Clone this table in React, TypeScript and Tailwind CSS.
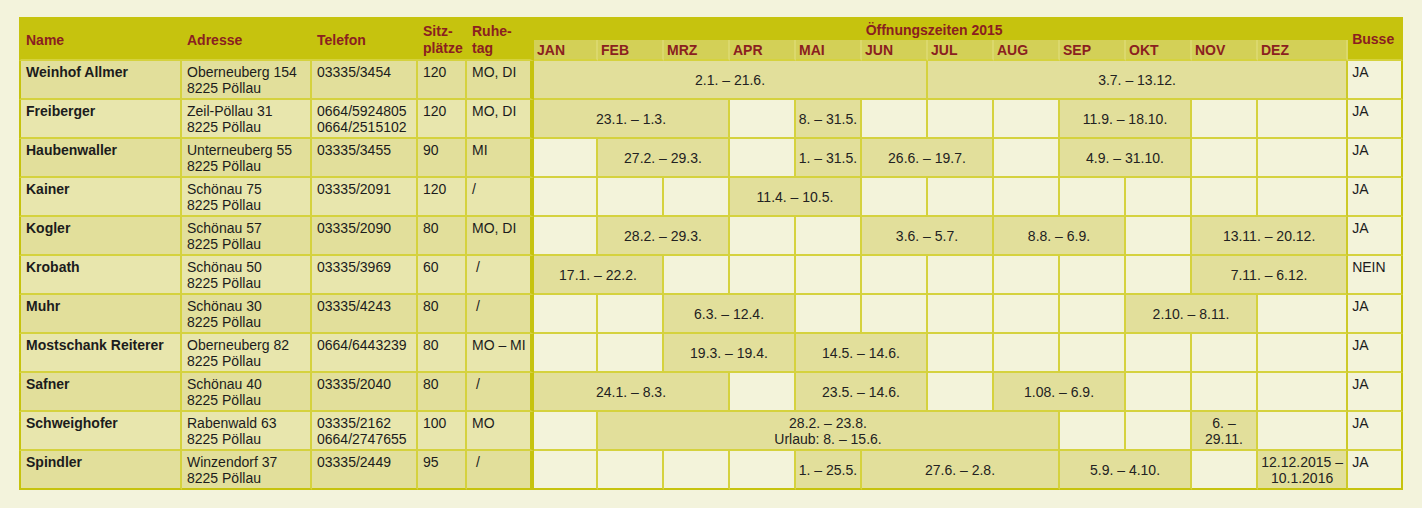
import React from 'react';

type Cell = [number, ...string[]];

type Row = {
    name: string;
    adr: string[];
    tel: string[];
    sitz: string;
    ruhe: string;
    months: Cell[];
    bus: string;
};

const MONTHS = ['JAN', 'FEB', 'MRZ', 'APR', 'MAI', 'JUN', 'JUL', 'AUG', 'SEP', 'OKT', 'NOV', 'DEZ'];

const ort = '8225 Pöllau';

const rows: Row[] = [
    { name: 'Weinhof Allmer', adr: ['Oberneuberg 154', ort], tel: ['03335/3454'], sitz: '120', ruhe: 'MO, DI', months: [[6, '2.1. – 21.6.'], [6, '3.7. – 13.12.']], bus: 'JA' },
    { name: 'Freiberger', adr: ['Zeil-Pöllau 31', ort], tel: ['0664/5924805', '0664/2515102'], sitz: '120', ruhe: 'MO, DI', months: [[3, '23.1. – 1.3.'], [1], [1, '8. – 31.5.'], [1], [1], [1], [2, '11.9. – 18.10.'], [1], [1]], bus: 'JA' },
    { name: 'Haubenwaller', adr: ['Unterneuberg 55', ort], tel: ['03335/3455'], sitz: '90', ruhe: 'MI', months: [[1], [2, '27.2. – 29.3.'], [1], [1, '1. – 31.5.'], [2, '26.6. – 19.7.'], [1], [2, '4.9. – 31.10.'], [1], [1]], bus: 'JA' },
    { name: 'Kainer', adr: ['Schönau 75', ort], tel: ['03335/2091'], sitz: '120', ruhe: '/', months: [[1], [1], [1], [2, '11.4. – 10.5.'], [1], [1], [1], [1], [1], [1], [1]], bus: 'JA' },
    { name: 'Kogler', adr: ['Schönau 57', ort], tel: ['03335/2090'], sitz: '80', ruhe: 'MO, DI', months: [[1], [2, '28.2. – 29.3.'], [1], [1], [2, '3.6. – 5.7.'], [2, '8.8. – 6.9.'], [1], [2, '13.11. – 20.12.']], bus: 'JA' },
    { name: 'Krobath', adr: ['Schönau 50', ort], tel: ['03335/3969'], sitz: '60', ruhe: '\u00a0/', months: [[2, '17.1. – 22.2.'], [1], [1], [1], [1], [1], [1], [1], [1], [2, '7.11. – 6.12.']], bus: 'NEIN' },
    { name: 'Muhr', adr: ['Schönau 30', ort], tel: ['03335/4243'], sitz: '80', ruhe: '\u00a0/', months: [[1], [1], [2, '6.3. – 12.4.'], [1], [1], [1], [1], [1], [2, '2.10. – 8.11.'], [1]], bus: 'JA' },
    { name: 'Mostschank Reiterer', adr: ['Oberneuberg 82', ort], tel: ['0664/6443239'], sitz: '80', ruhe: 'MO – MI', months: [[1], [1], [2, '19.3. – 19.4.'], [2, '14.5. – 14.6.'], [1], [1], [1], [1], [1], [1]], bus: 'JA' },
    { name: 'Safner', adr: ['Schönau 40', ort], tel: ['03335/2040'], sitz: '80', ruhe: '\u00a0/', months: [[3, '24.1. – 8.3.'], [1], [2, '23.5. – 14.6.'], [1], [2, '1.08. – 6.9.'], [1], [1], [1]], bus: 'JA' },
    { name: 'Schweighofer', adr: ['Rabenwald 63', ort], tel: ['03335/2162', '0664/2747655'], sitz: '100', ruhe: 'MO', months: [[1], [7, '28.2. – 23.8.', 'Urlaub: 8. – 15.6.'], [1], [1], [1, '6. –', '29.11.'], [1]], bus: 'JA' },
    { name: 'Spindler', adr: ['Winzendorf 37', ort], tel: ['03335/2449'], sitz: '95', ruhe: '\u00a0/', months: [[1], [1], [1], [1], [1, '1. – 25.5.'], [3, '27.6. – 2.8.'], [2, '5.9. – 4.10.'], [1], [1, '12.12.2015 –', '10.1.2016']], bus: 'JA' },
];

const Lines = ({ items }: { items: string[] }) => (
    <>
        {items.map((l, i) => (
            <div key={i}>{l}</div>
        ))}
    </>
);

export default function App() {
    return (
        <div className="min-h-[508px] bg-[#f3f3dc] pl-[19px] pt-[17px] font-['Liberation_Sans',Arial,sans-serif] text-[14px] leading-4 text-[#1c1c1c]">
            <table className="w-[1384px] table-fixed border-separate border-spacing-0">
                <colgroup>
                    <col className="w-[163px]" />
                    <col className="w-[130px]" />
                    <col className="w-[106px]" />
                    <col className="w-[49px]" />
                    <col className="w-[67px]" />
                    <col className="w-[64px]" />
                    {MONTHS.slice(1, 11).map((m) => (
                        <col key={m} className="w-[66px]" />
                    ))}
                    <col className="w-[90px]" />
                    <col className="w-[55px]" />
                </colgroup>
                <thead className="font-bold text-[#8a2020]">
                    <tr className="h-[23px]">
                        <th rowSpan={2} className="bg-[#c6c30e] pl-[5px] pt-[3px] text-left align-middle border-l-2 border-l-[#c6c30e] border-b-2 border-b-[#d5d23e]">Name</th>
                        <th rowSpan={2} className="bg-[#c6c30e] pl-[5px] pt-[3px] text-left align-middle border-b-2 border-b-[#d5d23e]">Adresse</th>
                        <th rowSpan={2} className="bg-[#c6c30e] pl-[5px] pt-[3px] text-left align-middle border-b-2 border-b-[#d5d23e]">Telefon</th>
                        <th rowSpan={2} className="bg-[#c6c30e] pl-[5px] pt-[3px] text-left align-middle leading-[17px] border-b-2 border-b-[#d5d23e]">
                            Sitz-<br />plätze
                        </th>
                        <th rowSpan={2} className="bg-[#c6c30e] pl-[5px] pt-[3px] text-left align-middle leading-[17px] border-r-4 border-r-[#c6c30e] border-b-2 border-b-[#d5d23e]">
                            Ruhe-<br />tag
                        </th>
                        <th colSpan={12} className="bg-[#c6c30e] pt-[2px] text-center align-middle pr-[14px]">Öffnungszeiten 2015</th>
                        <th rowSpan={2} className="bg-[#c6c30e] pl-[4px] pt-[2px] text-left align-middle border-r-2 border-r-[#c6c30e] border-b-2 border-b-[#d5d23e]">Busse</th>
                    </tr>
                    <tr className="h-[21px]">
                        {MONTHS.map((m) => (
                            <th key={m} className="bg-[#d3d057] pl-[3px] pt-[1px] text-left align-middle border-r-2 border-r-[#dbd86c] border-b-2 border-b-[#d5d23e]">
                                {m}
                            </th>
                        ))}
                    </tr>
                </thead>
                <tbody>
                    {rows.map((r, ri) => {
                        const last = ri === rows.length - 1;
                        const bottom = last ? 'border-b-2 border-b-[#c6c30e]' : 'border-b-2 border-b-[#d5d23e]';
                        const left = ri % 2 === 0 ? 'bg-[#e2df9b]' : 'bg-[#e8e6ad]';
                        const base = `${left} ${bottom} pl-[5px] pt-[3px] pb-[2px] align-top border-r-2 border-r-[#d5d23e]`;
                        let pos = 0;
                        return (
                            <tr key={r.name} className="h-[39px]">
                                <td className={`${base} font-bold border-l-2 border-l-[#c6c30e]`}>{r.name}</td>
                                <td className={base}>
                                    <Lines items={r.adr} />
                                </td>
                                <td className={base}>
                                    <Lines items={r.tel} />
                                </td>
                                <td className={base}>{r.sitz}</td>
                                <td className={`${left} ${bottom} pl-[5px] pt-[3px] pb-[2px] align-top border-r-4 border-r-[#c6c30e]`}>{r.ruhe}</td>
                                {r.months.map(([n, ...text], mi) => {
                                    pos += n;
                                    const open = text.length > 0;
                                    const edge = pos === 12 ? 'border-r-2 border-r-[#cdca28]' : 'border-r-2 border-r-[#d5d23e]';
                                    return (
                                        <td
                                            key={mi}
                                            colSpan={n}
                                            className={`${open ? 'bg-[#e2df9b]' : 'bg-[#f3f3da]'} ${bottom} ${edge} px-[2px] text-center align-middle text-[#222]`}
                                        >
                                            {open && <Lines items={text} />}
                                        </td>
                                    );
                                })}
                                <td className={`bg-[#f3f3da] ${bottom} pl-[4px] pt-[3px] pb-[2px] align-top border-r-2 border-r-[#c6c30e]`}>{r.bus}</td>
                            </tr>
                        );
                    })}
                </tbody>
            </table>
        </div>
    );
}
